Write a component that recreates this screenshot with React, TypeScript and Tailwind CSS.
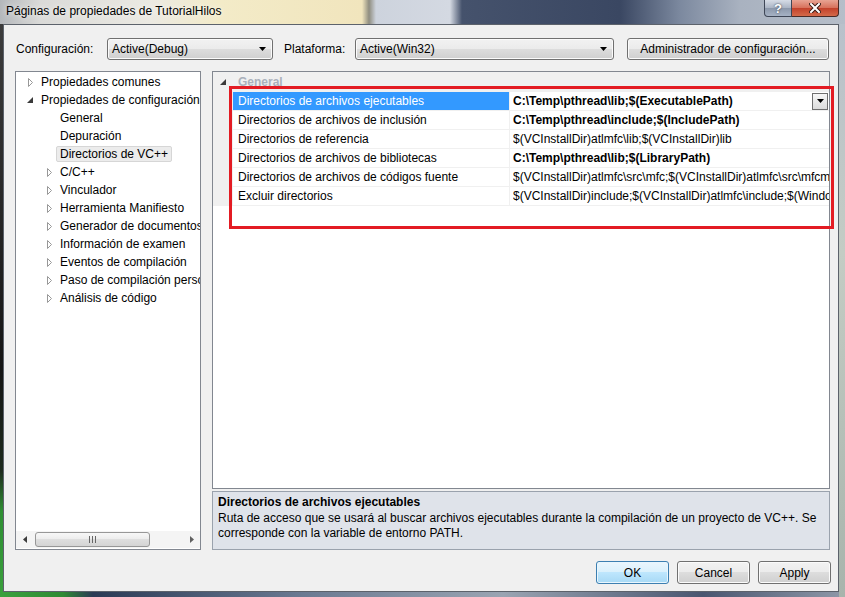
import React from "react";

type TreeItem = { label: string; level: 1 | 2; arrow?: "open" | "closed"; selected?: boolean };

const tree: TreeItem[] = [
  { label: "Propiedades comunes", level: 1, arrow: "closed" },
  { label: "Propiedades de configuración", level: 1, arrow: "open" },
  { label: "General", level: 2 },
  { label: "Depuración", level: 2 },
  { label: "Directorios de VC++", level: 2, selected: true },
  { label: "C/C++", level: 2, arrow: "closed" },
  { label: "Vinculador", level: 2, arrow: "closed" },
  { label: "Herramienta Manifiesto", level: 2, arrow: "closed" },
  { label: "Generador de documentos XML", level: 2, arrow: "closed" },
  { label: "Información de examen", level: 2, arrow: "closed" },
  { label: "Eventos de compilación", level: 2, arrow: "closed" },
  { label: "Paso de compilación personalizada", level: 2, arrow: "closed" },
  { label: "Análisis de código", level: 2, arrow: "closed" },
];

const props = [
  { name: "Directorios de archivos ejecutables", value: "C:\\Temp\\pthread\\lib;$(ExecutablePath)", bold: true },
  { name: "Directorios de archivos de inclusión", value: "C:\\Temp\\pthread\\include;$(IncludePath)", bold: true },
  { name: "Directorios de referencia", value: "$(VCInstallDir)atlmfc\\lib;$(VCInstallDir)lib", bold: false },
  { name: "Directorios de archivos de bibliotecas", value: "C:\\Temp\\pthread\\lib;$(LibraryPath)", bold: true },
  {
    name: "Directorios de archivos de códigos fuente",
    value: "$(VCInstallDir)atlmfc\\src\\mfc;$(VCInstallDir)atlmfc\\src\\mfcm;$(VCInstallDir)atlmfc\\src\\atl;$(VCInstallDir)crt\\src",
    bold: false,
  },
  {
    name: "Excluir directorios",
    value: "$(VCInstallDir)include;$(VCInstallDir)atlmfc\\include;$(WindowsSdkDir)include;$(FrameworkSDKDir)\\include",
    bold: false,
  },
];

function TreeArrow({ kind }: { kind: "open" | "closed" }) {
  if (kind === "open") {
    return (
      <svg width="6" height="6" viewBox="0 0 6 6">
        <path d="M6 0V6H0Z" fill="#3a3a3a" />
      </svg>
    );
  }
  return (
    <svg width="5" height="9" viewBox="0 0 5 9">
      <path d="M0.5 0.5L4.5 4.5L0.5 8.5Z" fill="none" stroke="#989898" />
    </svg>
  );
}

function DownTriangle() {
  return (
    <svg width="7" height="4" viewBox="0 0 7 4">
      <path d="M0 0H7L3.5 4Z" fill="#000" />
    </svg>
  );
}

const winBtn =
  "border border-[#707070] rounded-[3px] bg-[linear-gradient(180deg,#f2f2f2_0%,#ebebeb_50%,#dddddd_50%,#cfcfcf_100%)] shadow-[inset_0_0_0_1px_#fbfbfb]";

function Combo({ value, width }: { value: string; width: string }) {
  return (
    <div className={`${winBtn} ${width} h-[22px] flex items-center pl-[4px] pr-[6px]`}>
      <span className="flex-1">{value}</span>
      <DownTriangle />
    </div>
  );
}

export default function App() {
  return (
    <div className="w-[845px] h-[597px] overflow-hidden flex flex-col bg-[#9aa3ae] font-['Liberation_Sans',Arial,sans-serif] text-[12px] text-black">
      {/* title bar */}
      <div className="h-[24px] shrink-0 flex bg-[linear-gradient(90deg,#b4b7bb_0px,#dadad8_40px,#ebe9e2_150px,#f3ebc8_220px,#f1e5bd_362px,#8f8d80_369px,#cdd3dd_376px,#d4d9e2_450px,#45526c_462px,#3a4762_620px,#7c899f_680px,#a9b2c0_740px,#b6bec9_845px)]">
        <div className="flex-1 pl-[6px] pt-[4px] leading-[15px] [text-shadow:0_0_6px_#ffffff]">
          Páginas de propiedades de TutorialHilos
        </div>
        <div className="flex items-start mr-[6px]">
          <div className="w-[28px] h-[17px] rounded-bl-[4px] border border-[#3e4656] border-t-0 bg-[linear-gradient(180deg,#d6dce6_0%,#aab4c4_50%,#8b97aa_50%,#a6b2c4_100%)] flex items-center justify-center text-white font-bold text-[13px] leading-none [text-shadow:0_0_2px_#202838]">
            ?
          </div>
          <div className="w-[47px] h-[17px] rounded-br-[4px] border border-[#4a2a26] border-t-0 border-l-0 bg-[linear-gradient(180deg,#e8a493_0%,#d7705a_50%,#c2402a_50%,#d46a4a_100%)] flex items-center justify-center">
            <svg width="12" height="10" viewBox="0 0 12 10">
              <path d="M2 1L10 9M10 1L2 9" stroke="#3a1a14" strokeWidth="4" strokeLinecap="square" />
              <path d="M2 1L10 9M10 1L2 9" stroke="#ffffff" strokeWidth="2" strokeLinecap="square" />
            </svg>
          </div>
        </div>
      </div>

      <div className="flex flex-1">
        {/* left frame */}
        <div className="w-[3px] bg-[linear-gradient(180deg,#3c3c3c_0%,#151515_60%,#1d2a1d_78%,#2f8f33_85%,#3aa03d_100%)]" />

        <div className="flex flex-col">
          {/* client area */}
          <div className="w-[836px] h-[568px] border border-[#5c626b] bg-[#f0f0f0] flex flex-col">
            {/* top row */}
            <div className="flex items-center pt-[13px] pl-[12px] h-[35px]">
              <span className="w-[91px]">Configuración:</span>
              <Combo value="Active(Debug)" width="w-[166px]" />
              <span className="w-[71px] ml-[11px]">Plataforma:</span>
              <Combo value="Active(Win32)" width="w-[259px]" />
              <div className={`${winBtn} ml-[13px] w-[202px] h-[22px] flex items-center justify-center`}>
                Administrador de configuración...
              </div>
            </div>

            {/* main area */}
            <div className="flex mt-[11px] pl-[11px] pr-[8px] h-[479px]">
              {/* tree */}
              <div className="w-[186px] border border-[#828790] bg-white flex flex-col">
                <div className="flex-1 pt-[1px] overflow-hidden">
                  {tree.map((item, i) => (
                    <div
                      key={i}
                      className={`h-[18px] flex items-center whitespace-nowrap ${item.level === 1 ? "pl-[9px]" : "pl-[28px]"}`}
                    >
                      <div className="w-[10px] flex items-center justify-center shrink-0">
                        {item.arrow && <TreeArrow kind={item.arrow} />}
                      </div>
                      <span
                        className={`ml-[2px] px-[3px] h-[16px] leading-[14px] border rounded-[2px] ${
                          item.selected ? "bg-[#ececec] border-[#d6d6d6]" : "border-transparent"
                        }`}
                      >
                        {item.label}
                      </span>
                    </div>
                  ))}
                </div>
                {/* horizontal scrollbar */}
                <div className="h-[17px] mb-[1px] flex items-center bg-[#f4f4f4]">
                  <div className="w-[17px] flex justify-center">
                    <svg width="4" height="7" viewBox="0 0 4 7">
                      <path d="M4 0V7L0 3.5Z" fill="#3c3c3c" />
                    </svg>
                  </div>
                  <div className="ml-[2px] w-[115px] h-[15px] rounded-[3px] border border-[#979797] bg-[linear-gradient(180deg,#f7f7f7_0%,#ececec_50%,#dedede_50%,#d4d4d4_100%)] flex items-center justify-center">
                    <svg width="7" height="7" viewBox="0 0 7 7">
                      <path d="M0.5 0V7M3.5 0V7M6.5 0V7" stroke="#666" />
                    </svg>
                  </div>
                  <div className="flex-1" />
                  <div className="w-[17px] flex justify-center">
                    <svg width="4" height="7" viewBox="0 0 4 7">
                      <path d="M0 0V7L4 3.5Z" fill="#606060" />
                    </svg>
                  </div>
                </div>
              </div>

              {/* property grid + description */}
              <div className="relative w-[618px] ml-[11px] flex flex-col">
                <div className="h-[418px] border border-[#828790] bg-white flex flex-col overflow-hidden">
                  <div className="h-[20px] shrink-0 bg-[#f0f0f0] flex items-center">
                    <div className="w-[20px] flex justify-center">
                      <TreeArrow kind="open" />
                    </div>
                    <span className="pl-[5px] font-bold text-[#aab0bb]">General</span>
                  </div>
                  {props.map((p, i) => (
                    <div key={i} className="h-[19px] shrink-0 flex border-b border-[#f0f0f0]">
                      <div className="w-[20px] bg-[#f0f0f0]" />
                      <div
                        className={`w-[277px] pl-[5px] flex items-center border-r border-[#f0f0f0] whitespace-nowrap ${
                          i === 0 ? "bg-[#3399ff] text-white" : ""
                        }`}
                      >
                        {p.name}
                      </div>
                      <div className="flex-1 min-w-0 flex items-center pl-[3px]">
                        <span className={`flex-1 min-w-0 overflow-hidden whitespace-nowrap ${p.bold ? "font-bold" : ""}`}>
                          {p.value}
                        </span>
                        {i === 0 && (
                          <div className="w-[16px] h-[17px] mr-[1px] border border-[#6f6f6f] bg-[linear-gradient(180deg,#f6f6f6_0%,#dcdcdc_100%)] flex items-center justify-center">
                            <DownTriangle />
                          </div>
                        )}
                      </div>
                    </div>
                  ))}
                </div>

                <div className="mt-[2px] h-[59px] border border-[#9aa2ad] bg-[#dfe3ea] pl-[5px] pt-[3px] leading-[15px]">
                  <div className="font-bold">Directorios de archivos ejecutables</div>
                  <div className="mt-[1px]">
                    Ruta de acceso que se usará al buscar archivos ejecutables durante la compilación de un proyecto de VC++. Se
                    <br />
                    corresponde con la variable de entorno PATH.
                  </div>
                </div>

                {/* red highlight annotation */}
                <div className="absolute left-[17px] top-[15px] w-[605px] h-[143px] border-[3px] border-[#e31b23] pointer-events-none" />
              </div>
            </div>

            {/* dialog buttons */}
            <div className="flex justify-end gap-[8px] mt-[11px] pr-[7px]">
              <div className="w-[73px] h-[23px] rounded-[3px] border border-[#3c7fb1] bg-[linear-gradient(180deg,#eaf6fd_0%,#d9f0fc_50%,#bee6fd_50%,#a7d9f5_100%)] shadow-[inset_0_0_0_1px_#e8f6fe] flex items-center justify-center">
                OK
              </div>
              <div className={`${winBtn} w-[73px] h-[23px] flex items-center justify-center`}>Cancel</div>
              <div className={`${winBtn} w-[73px] h-[23px] flex items-center justify-center`}>Apply</div>
            </div>
          </div>
          {/* bottom frame */}
          <div className="flex-1 bg-[linear-gradient(90deg,#3aa03d_0px,#2f8a33_60px,#2b3a55_90px,#6b7a92_300px,#9aa4b2_500px,#4a5670_700px,#8c96a6_836px)]" />
        </div>

        {/* right frame */}
        <div className="flex-1 bg-[linear-gradient(180deg,#b9c1cb_0%,#c4ccc4_40%,#a8b4ac_100%)]" />
      </div>
    </div>
  );
}
